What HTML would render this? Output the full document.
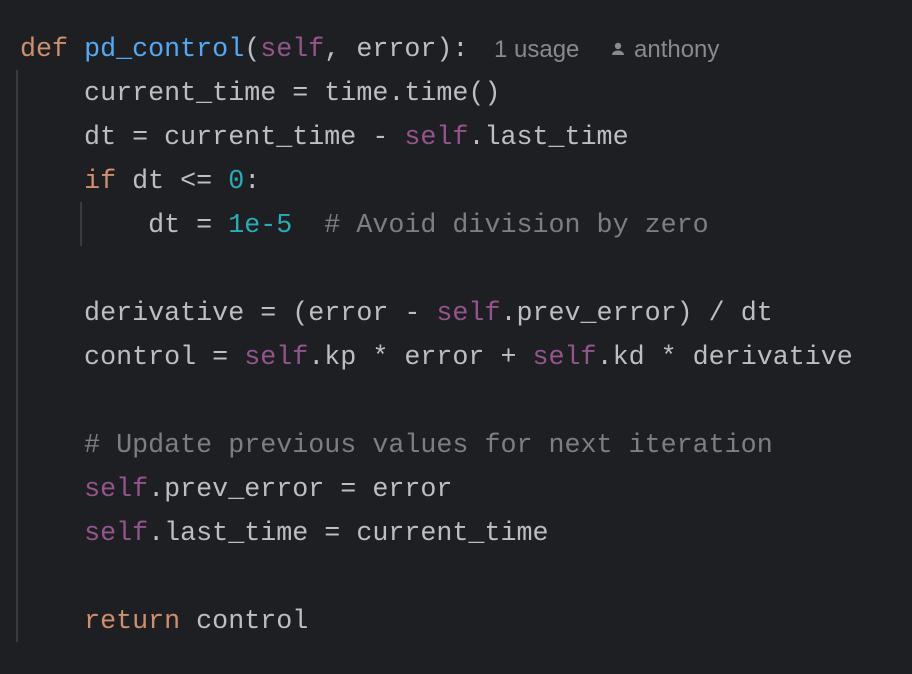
<html><head><style>
body{margin:0;background:#1e1f22;width:912px;height:674px;overflow:hidden;position:relative}
pre{position:absolute;left:20px;top:28px;margin:0;font-family:"Liberation Mono",monospace;font-size:26.7px;line-height:44px;color:#bcbec4}
.k{color:#cf8e6d}.f{color:#56a8f5}.s{color:#94558d}.n{color:#2aacb8}.c{color:#7a7e85}
.hint{position:absolute;top:36px;font-family:"Liberation Sans",sans-serif;font-size:24px;color:#868a91}
.g{position:absolute;background:#393b40;width:2px}
</style></head><body>
<div class="g" style="left:16px;top:70px;height:572px"></div>
<div class="g" style="left:80px;top:202px;height:44px"></div>
<pre><span class="k">def</span> <span class="f">pd_control</span>(<span class="s">self</span>, error):
    current_time = time.time()
    dt = current_time - <span class="s">self</span>.last_time
    <span class="k">if</span> dt &lt;= <span class="n">0</span>:
        dt = <span class="n">1e-5</span>  <span class="c"># Avoid division by zero</span>

    derivative = (error - <span class="s">self</span>.prev_error) / dt
    control = <span class="s">self</span>.kp * error + <span class="s">self</span>.kd * derivative

    <span class="c"># Update previous values for next iteration</span>
    <span class="s">self</span>.prev_error = error
    <span class="s">self</span>.last_time = current_time

    <span class="k">return</span> control</pre>
<div class="hint" style="left:494px">1 usage</div>
<svg style="position:absolute;left:610px;top:41px" width="16" height="16" viewBox="0 0 16 16"><circle cx="8" cy="5" r="3.2" fill="#868a91"/><path d="M2 14c0-3 3-4.5 6-4.5s6 1.5 6 4.5z" fill="#868a91"/></svg>
<div class="hint" style="left:634px">anthony</div>
</body></html>
